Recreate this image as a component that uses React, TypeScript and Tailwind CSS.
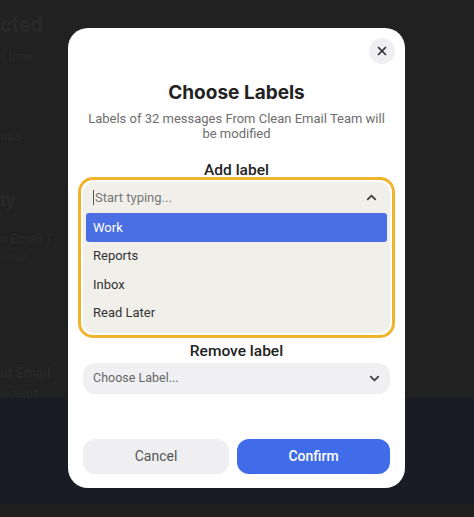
import { ChevronDown, ChevronUp, X } from 'lucide-react'

const options = ['Work', 'Reports', 'Inbox', 'Read Later']

export default function App() {
  return (
    <div className="relative w-[474px] h-[517px] overflow-hidden bg-[#212121] font-['Roboto',sans-serif]">
      {/* Dimmed page behind the modal */}
      <div className="flex flex-col h-full">
        <div className="flex flex-col h-[398px] pt-[12px] text-[#292929]">
          <div className="text-[22px] leading-[26px] font-bold">cted</div>
          <div className="mt-[10px] text-[12px]">ll time</div>
          <div className="mt-[60px] text-[13px]">ups</div>
          <div className="mt-[40px] text-[18px] font-bold">ty</div>
          <div className="mt-[16px] text-[13px]">n Email T</div>
          <div className="mt-[2px] text-[11px]">n min</div>
          <div className="mt-[96px] text-[14px] font-semibold">ut Email</div>
          <div className="mt-[2px] text-[11px]">lections</div>
        </div>
        <div className="h-[106px] bg-[#1a1c25]" />
        <div className="flex-1 bg-[#1f1f1f]" />
      </div>

      {/* Modal */}
      <div className="absolute left-[68px] top-[28px] w-[337px] h-[460px] rounded-[20px] bg-white px-[15px] pb-[14px] pt-[50px] flex flex-col">
        <button className="absolute right-[10px] top-[10px] w-[26px] h-[26px] rounded-full bg-[#efeff1] flex items-center justify-center text-[#333]">
          <X size={14} strokeWidth={3} />
        </button>

        <h2 className="text-center text-[19px] leading-[30px] font-bold text-[#222] font-['Inter',sans-serif]">Choose Labels</h2>
        <p className="mt-[3px] text-center text-[13px] leading-[15px] text-[#6e6e6e]">
          Labels of 32 messages From Clean Email Team will be modified
        </p>

        <div className="mt-[20px] text-center text-[15.5px] leading-[18px] font-medium text-[#222]">Add label</div>
        <div className="mt-[3px] rounded-[10px] bg-[#f1efea] ring-[3px] ring-[#f1b22c] ring-offset-2 ring-offset-white px-[3px] pb-[6px]">
          <div className="flex items-center justify-between h-[31px] pl-[7px] pr-[8px]">
            <span className="text-[13px] text-[#777] border-l border-[#555] pl-[1px] leading-[15px]">Start typing...</span>
            <ChevronUp size={15} strokeWidth={3} className="text-[#444]" />
          </div>
          <div className="flex flex-col">
            {options.map((o, i) => (
              <div
                key={o}
                className={
                  i === 0
                    ? 'h-[28.5px] flex items-center px-[7px] rounded-[3px] bg-[#4a6fe3] text-white text-[13px]'
                    : 'h-[28.5px] flex items-center px-[7px] text-[#333] text-[13px]'
                }
              >
                {o}
              </div>
            ))}
          </div>
        </div>

        <div className="mt-[9px] text-center text-[15.5px] leading-[18px] font-medium text-[#222]">Remove label</div>
        <div className="mt-[3px] h-[31px] rounded-[12px] bg-[#f0f0f2] flex items-center justify-between pl-[10px] pr-[8px]">
          <span className="text-[12.5px] text-[#666]">Choose Label...</span>
          <ChevronDown size={15} strokeWidth={3} className="text-[#444]" />
        </div>

        <div className="mt-auto flex gap-[8px]">
          <button className="w-[146px] h-[35px] rounded-[12px] bg-[#efeff1] text-[14px] text-[#555]">Cancel</button>
          <button className="flex-1 h-[35px] rounded-[12px] bg-[#416ce9] text-[14px] font-medium text-white">Confirm</button>
        </div>
      </div>
    </div>
  )
}
